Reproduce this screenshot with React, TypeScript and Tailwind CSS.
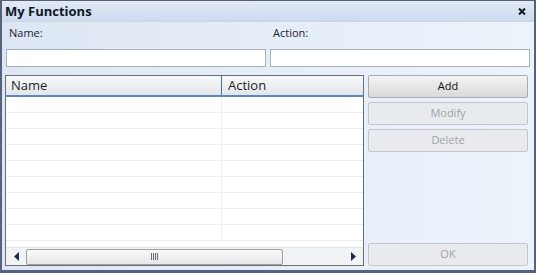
import React from 'react'

const font = { fontFamily: '"Open Sans", "DejaVu Sans", sans-serif' }

function Btn({ label, disabled }: { label: string; disabled?: boolean }) {
  return (
    <button
      className={`h-[23px] w-full rounded-[2px] border text-[11px] ${
        disabled
          ? 'border-[#c2c6cc] bg-[#e8eaed] text-[#9ea3a9]'
          : 'border-[#a6abb2] bg-gradient-to-b from-[#f4f4f4] to-[#d9d9d9] text-[#111]'
      }`}
    >
      {label}
    </button>
  )
}

export default function App() {
  const rows = Array.from({ length: 9 })
  return (
    <div
      style={font}
      className="w-[536px] h-[273px] flex flex-col border-x-2 border-b-[3px] border-t border-[#56627d] bg-gradient-to-r from-[#dde7f3] to-[#edf3fb]"
    >
      {/* title bar */}
      <div className="h-[21px] flex items-center justify-between pl-[3px] pr-[8px] bg-gradient-to-b from-[#e2eaf5] to-[#ccdbee] border-b border-[#c8d5e6]">
        <span className="text-[13px] font-bold text-[#10182a] leading-none">My Functions</span>
        <svg width="8" height="7" viewBox="0 0 8 7">
          <path d="M1 0.5 L7 6.5 M7 0.5 L1 6.5" stroke="#10182a" strokeWidth="2" />
        </svg>
      </div>

      {/* fields */}
      <div className="flex gap-1 px-1">
        <div className="flex-1 flex flex-col">
          <span className="h-[22px] pl-[3px] text-[11px] text-[#1a2233] leading-[22px]">Name:</span>
          <div className="mt-[5px] h-[18px] bg-white border border-[#a9b0b8]" />
        </div>
        <div className="flex-1 flex flex-col">
          <span className="h-[22px] pl-[3px] text-[11px] text-[#1a2233] leading-[22px]">Action:</span>
          <div className="mt-[5px] h-[18px] bg-white border border-[#a9b0b8]" />
        </div>
      </div>

      {/* grid + buttons */}
      <div className="flex-1 flex gap-[4px] pl-[3px] pr-[6px] pt-[8px] pb-[4px]">
        <div className="w-[359px] flex flex-col border border-[#6a6f76] bg-white">
          <div className="h-[21px] flex border-b-2 border-[#5b87c3] bg-gradient-to-b from-[#f7f8fa] to-[#e3e6ea] text-[13px] text-[#1b1f26]">
            <div className="w-[216px] pl-[5px] flex items-center border-r border-[#4d6f9e]">Name</div>
            <div className="flex-1 pl-[6px] flex items-center">Action</div>
          </div>
          <div className="flex-1 flex flex-col overflow-hidden">
            {rows.map((_, i) => (
              <div key={i} className="h-[16px] shrink-0 flex border-b border-[#eeeeee]">
                <div className="w-[216px] border-r border-[#eeeeee]" />
                <div className="flex-1" />
              </div>
            ))}
          </div>
          {/* horizontal scrollbar */}
          <div className="h-[18px] flex items-center bg-[#f2f3f4] border-t border-[#e2e4e6]">
            <div className="w-[20px] flex justify-center">
              <svg width="5" height="9" viewBox="0 0 5 9"><path d="M5 0 L0 4.5 L5 9 Z" fill="#1d2a4a" /></svg>
            </div>
            <div className="w-[257px] h-[16px] flex items-center justify-center rounded-[2px] border border-[#9aa0a7] bg-gradient-to-b from-[#f8f8f8] to-[#e6e7e9]">
              <svg width="7" height="7" viewBox="0 0 7 7">
                <path d="M0.5 0 V7 M2.5 0 V7 M4.5 0 V7 M6.5 0 V7" stroke="#6a6f76" strokeWidth="1" />
              </svg>
            </div>
            <div className="flex-1" />
            <div className="w-[20px] flex justify-center">
              <svg width="5" height="9" viewBox="0 0 5 9"><path d="M0 0 L5 4.5 L0 9 Z" fill="#1d2a4a" /></svg>
            </div>
          </div>
        </div>

        <div className="flex-1 flex flex-col">
          <div className="flex flex-col gap-[4px]">
            <Btn label="Add" />
            <Btn label="Modify" disabled />
            <Btn label="Delete" disabled />
          </div>
          <div className="flex-1" />
          <Btn label="OK" disabled />
        </div>
      </div>
    </div>
  )
}
